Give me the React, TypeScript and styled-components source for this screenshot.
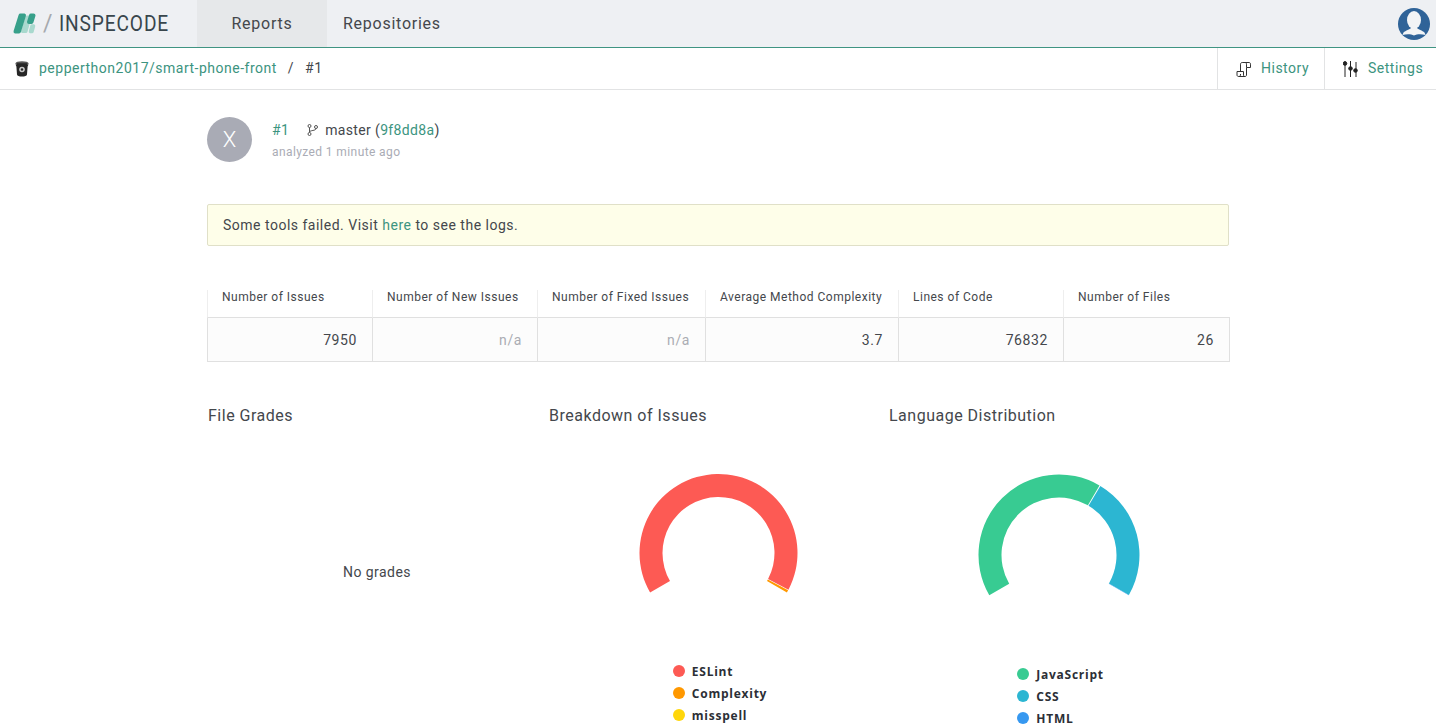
import React from "react";
import styled, { createGlobalStyle } from "styled-components";

const Global = createGlobalStyle`
  html, body { margin: 0; padding: 0; height: 727px; overflow: hidden; background: #fff; }
  body { font-family: Roboto, "Liberation Sans", sans-serif; color: #44474c; -webkit-font-smoothing: antialiased; }
  a { color: #3c9480; text-decoration: none; }
`;

const TopBar = styled.header`
  height: 47px; display: flex; align-items: stretch; background: #eef0f3;
  border-bottom: 1px solid #3f9482;
`;
const Brand = styled.div`
  width: 197px; display: flex; align-items: center; padding-left: 12px; box-sizing: border-box;
`;
const Slash = styled.span`
  font-size: 23px; font-weight: 400; color: #a6a9ad; margin-left: 7px; width: 16px;
`;
const BrandName = styled.span`
  font-size: 22px; font-weight: 400; color: #38464c; letter-spacing: 1px; display: inline-block;
  transform: scaleX(0.87); transform-origin: left center;
`;
const Tab = styled.div<{ $active?: boolean }>`
  display: flex; align-items: center; justify-content: center; padding: 0 16px;
  width: ${p => (p.$active ? "130px" : "auto")}; box-sizing: border-box;
  background: ${p => (p.$active ? "#e6e8ea" : "transparent")};
  font-size: 16px; letter-spacing: 0.75px; color: #44474c;
`;
const Spacer = styled.div`flex: 1;`;
const Avatar = styled.div`display: flex; align-items: center; padding-right: 6px;`;

const SubBar = styled.div`
  height: 41px; display: flex; align-items: stretch; border-bottom: 1px solid #e2e3e4; background: #fff;
`;
const Crumbs = styled.div`
  flex: 1; display: flex; align-items: center; padding: 0 0 2px 15px; font-size: 14px; letter-spacing: 0.5px;
`;
const BucketWrap = styled.span`display: inline-flex; margin-top: 2px;`;
const CrumbLink = styled.a`margin-left: 10px;`;
const CrumbSep = styled.span`margin: 0 11px 0 11px;`;
const CrumbNum = styled.span``;
const SubAction = styled.div`
  display: flex; align-items: center; gap: 9px; border-left: 1px solid #e2e3e4; box-sizing: border-box;
  padding-bottom: 2px; font-size: 14px; letter-spacing: 0.5px; color: #3c9480;
`;
const HistoryAction = styled(SubAction)`width: 107px; padding-left: 18px;`;
const SettingsAction = styled(SubAction)`width: 112px; padding-left: 18px; gap: 10px;`;
const ActionIcon = styled.span`display: inline-flex; margin-top: 2px;`;

const Main = styled.main`width: 1022px; margin-left: 207px;`;

const Summary = styled.section`display: flex; padding-top: 27px; height: 87px;`;
const Circle = styled.div`
  width: 45px; height: 45px; border-radius: 50%; background: #a9abb5; color: #fff;
  display: flex; align-items: center; justify-content: center; font-size: 22px; font-weight: 300;
`;
const SummaryText = styled.div`margin-left: 20px; padding-top: 4px;`;
const SummaryLine = styled.div`
  display: flex; align-items: center; font-size: 14px; letter-spacing: 0.35px; height: 17px;
`;
const Branch = styled.span`margin-left: 18px; margin-right: 7px; display: inline-flex;`;
const Analyzed = styled.div`font-size: 12px; letter-spacing: 0.4px; color: #aaacb5; margin-top: 7px;`;

const Alert = styled.div`
  height: 42px; box-sizing: border-box; display: flex; align-items: center; padding-left: 15px;
  background: #fefee9; border: 1px solid #e0e0c8; border-radius: 2px;
  font-size: 14px; letter-spacing: 0.5px; white-space: pre;
`;

const Metrics = styled.div`
  display: grid; grid-template-columns: 165px 165px 168px 193px 165px 167px; width: 1023px; margin-top: 44px;
`;
const MetricHead = styled.div`
  height: 28px; box-sizing: border-box; padding-left: 14px; font-size: 12px; line-height: 14px; letter-spacing: 0.5px;
  border-left: 1px solid #eee; border-bottom: 1px solid #e0e0e0;
`;
const MetricCell = styled.div<{ $muted?: boolean; $last?: boolean }>`
  height: 44px; box-sizing: border-box; display: flex; align-items: center; justify-content: flex-end;
  padding-right: 15px; background: #fcfcfc; font-size: 14px; letter-spacing: 0.6px;
  color: ${p => (p.$muted ? "#aaacb3" : "#44474c")};
  border-left: 1px solid #e0e0e0; border-bottom: 1px solid #e0e0e0;
  border-right: ${p => (p.$last ? "1px solid #e0e0e0" : "none")};
`;

const Charts = styled.section`
  display: grid; grid-template-columns: 341px 340px 341px; margin-top: 44px;
`;
const ChartCol = styled.div`display: flex; flex-direction: column; align-items: stretch;`;
const ChartTitle = styled.h3`
  margin: 0 0 0 1px; font-size: 16px; font-weight: 400; letter-spacing: 0.5px; line-height: 20px;
`;
const Empty = styled.div`
  margin-top: 136px; text-align: center; font-size: 14px; letter-spacing: 0.45px; line-height: 20px; padding-right: 1px;
`;
const Gauge = styled.svg`display: block; margin: 35px auto 0;`;
const Legend = styled.ul<{ $top: number }>`
  list-style: none; padding: 0 0 0 4px; margin: ${p => p.$top}px auto 0; display: flex; flex-direction: column;
`;
const LegendItem = styled.li`
  height: 22px; display: flex; align-items: center; gap: 7px;
  font-family: "Open Sans", Verdana, sans-serif; font-size: 12px; font-weight: 700; letter-spacing: 0.75px; color: #2c2f36;
`;
const Dot = styled.span<{ $c: string }>`
  width: 12px; height: 12px; border-radius: 50%; background: ${p => p.$c};
`;

function arc(cx: number, cy: number, R: number, r: number, a0: number, a1: number) {
  const pt = (rad: number, a: number) => {
    const t = ((a - 90) * Math.PI) / 180;
    return `${(cx + rad * Math.cos(t)).toFixed(2)} ${(cy + rad * Math.sin(t)).toFixed(2)}`;
  };
  const large = a1 - a0 > 180 ? 1 : 0;
  return `M${pt(R, a0)}A${R} ${R} 0 ${large} 1 ${pt(R, a1)}L${pt(r, a1)}A${r} ${r} 0 ${large} 0 ${pt(r, a0)}Z`;
}

const Logo = () => (
  <svg width="24" height="24" viewBox="0 0 24 24" strokeLinejoin="round">
    <polygon points="10.5,19.5 14,19.5 18,5 15,5" fill="#a9d9ce" stroke="#a9d9ce" strokeWidth="3" />
    <polygon points="18.5,19.5 20,19.5 21.5,14 20,14" fill="#a9d9ce" stroke="#a9d9ce" strokeWidth="3.5" />
    <polygon points="3.5,19.5 7,19.5 12,3.5 8.5,3.5" fill="#37a08a" stroke="#37a08a" strokeWidth="4" />
    <polygon points="19,3.5 21.5,3.5 19.5,10 17,10" fill="#37a08a" stroke="#37a08a" strokeWidth="4" />
  </svg>
);

const UserIcon = () => (
  <svg width="32" height="32" viewBox="0 0 32 32">
    <circle cx="16" cy="16" r="16" fill="#2f6398" />
    <ellipse cx="16" cy="12" rx="7" ry="9" fill="#f2f4f6" />
    <path d="M5.500 24.500c2-2 6.500-3 7.500-4.500h6c1 1.500 5.500 2.500 7.500 4.500l1 2.500c-4-1-8.500-1-11.500.5-3-1.500-7.500-1.500-11.500-.5z" fill="#f2f4f6" />
  </svg>
);

const Bucket = () => (
  <svg width="14" height="16" viewBox="0 0 14 16">
    <ellipse cx="7" cy="2.500" rx="6.500" ry="2.300" fill="#555" />
    <path d="M.5 3.500h13l-.9 2-.6 8c-.2 1.400-2.200 2-5 2s-4.800-.6-5-2l-.6-8z" fill="#262626" />
    <path d="M2 3h10" stroke="#111" strokeWidth="1" />
    <circle cx="7" cy="8.500" r="2.800" fill="#c8c8c8" />
    <circle cx="7" cy="8.500" r="1.200" fill="#262626" />
  </svg>
);

const ScrollIcon = () => (
  <svg width="16" height="16" viewBox="0 0 16 16" fill="none" stroke="#333" strokeWidth="1">
    <path d="M4.500 10.500V3.200c0-1 .7-1.700 1.700-1.700h6.800c1 0 1.500.7 1.500 1.700v3.300h-4V3.200c0-1-.6-1.700-1.500-1.700" />
    <path d="M10.500 6.500V14c0 1-.7 1.500-1.500 1.500H2.700" />
    <path d="M7.500 10.500H1V14c0 1 .8 1.500 1.700 1.500S4.500 15 4.500 14v-1M7.500 10.500V14c0 .8.6 1.500 1.500 1.500" />
  </svg>
);

const SlidersIcon = () => (
  <svg width="15" height="16" viewBox="0 0 15 16" stroke="#222" fill="#222" strokeWidth="1">
    <path d="M2 0v16M7.500 0v16M13 1v15" fill="none" />
    <circle cx="2" cy="2.500" r="1.800" />
    <circle cx="7.500" cy="7.500" r="1.800" />
    <circle cx="12.500" cy="9.500" r="1.800" />
  </svg>
);

const BranchIcon = () => (
  <svg width="11" height="12" viewBox="0 0 11 12" fill="none" stroke="#555" strokeWidth="1">
    <circle cx="2.500" cy="2" r="1.500" />
    <circle cx="2.500" cy="10" r="1.500" />
    <circle cx="9" cy="3" r="1.500" />
    <path d="M2.500 3.500v5M9 4.500C9 7 3 6 2.500 8" />
  </svg>
);

const heads = ["Number of Issues", "Number of New Issues", "Number of Fixed Issues", "Average Method Complexity", "Lines of Code", "Number of Files"];
const vals = ["7950", "n/a", "n/a", "3.7", "76832", "26"];

export default function App() {
  return (
    <>
      <Global />
      <TopBar>
        <Brand>
          <Logo />
          <Slash>/</Slash>
          <BrandName>INSPECODE</BrandName>
        </Brand>
        <Tab $active>Reports</Tab>
        <Tab>Repositories</Tab>
        <Spacer />
        <Avatar><UserIcon /></Avatar>
      </TopBar>
      <SubBar>
        <Crumbs>
          <BucketWrap><Bucket /></BucketWrap>
          <CrumbLink href="#">pepperthon2017/smart-phone-front</CrumbLink>
          <CrumbSep>/</CrumbSep>
          <CrumbNum>#1</CrumbNum>
        </Crumbs>
        <HistoryAction><ActionIcon><ScrollIcon /></ActionIcon>History</HistoryAction>
        <SettingsAction><ActionIcon><SlidersIcon /></ActionIcon>Settings</SettingsAction>
      </SubBar>
      <Main>
        <Summary>
          <Circle>X</Circle>
          <SummaryText>
            <SummaryLine>
              <a href="#">#1</a>
              <Branch><BranchIcon /></Branch>
              <span>master (<a href="#">9f8dd8a</a>)</span>
            </SummaryLine>
            <Analyzed>analyzed 1 minute ago</Analyzed>
          </SummaryText>
        </Summary>
        <Alert>Some tools failed. Visit <a href="#">here</a> to see the logs.</Alert>
        <Metrics>
          {heads.map(h => <MetricHead key={h}>{h}</MetricHead>)}
          {vals.map((v, i) => <MetricCell key={i} $muted={v === "n/a"} $last={i === 5}>{v}</MetricCell>)}
        </Metrics>
        <Charts>
          <ChartCol>
            <ChartTitle>File Grades</ChartTitle>
            <Empty>No grades</Empty>
          </ChartCol>
          <ChartCol>
            <ChartTitle>Breakdown of Issues</ChartTitle>
            <Gauge width="180" height="140" viewBox="0 0 180 140">
              <path d={arc(90.5, 92, 79, 56, -120, 117.7)} fill="#fd5a54" />
              <path d={arc(90.5, 92, 79, 56, 118.2, 120)} fill="#ff9800" />
            </Gauge>
            <Legend $top={59}>
              <LegendItem><Dot $c="#fd5a54" />ESLint</LegendItem>
              <LegendItem><Dot $c="#ff9800" />Complexity</LegendItem>
              <LegendItem><Dot $c="#ffd60a" />misspell</LegendItem>
            </Legend>
          </ChartCol>
          <ChartCol>
            <ChartTitle>Language Distribution</ChartTitle>
            <Gauge width="180" height="140" viewBox="0 0 180 140">
              <path d={arc(90, 94, 80.5, 57.5, -120, 30.2)} fill="#38cb92" />
              <path d={arc(90, 94, 80.5, 57.5, 30.9, 119.7)} fill="#2cb6d2" />
              <path d={arc(90, 94, 80.5, 57.5, 119.75, 120)} fill="#3698f0" />
            </Gauge>
            <Legend $top={62}>
              <LegendItem><Dot $c="#38cb92" />JavaScript</LegendItem>
              <LegendItem><Dot $c="#2cb6d2" />CSS</LegendItem>
              <LegendItem><Dot $c="#3698f0" />HTML</LegendItem>
            </Legend>
          </ChartCol>
        </Charts>
      </Main>
    </>
  );
}
